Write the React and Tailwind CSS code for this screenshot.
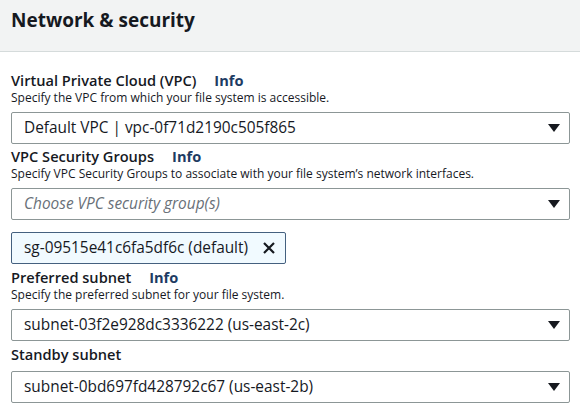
function Caret() {
  return (
    <svg width="12" height="8" viewBox="0 0 12 8" className="shrink-0">
      <path d="M0 0h12L6 8z" fill="#16191f" />
    </svg>
  );
}

function Select({ value, placeholder }) {
  return (
    <div className="flex h-[32px] items-center justify-between rounded-[2px] border border-[#8c9696] bg-white pl-[12px] pr-[9px]">
      {value ? (
        <span className="text-[15.4px] text-[#16191f]">{value}</span>
      ) : (
        <span className="text-[15.4px] italic text-[#687078]">{placeholder}</span>
      )}
      <Caret />
    </div>
  );
}

function Label({ children, info }) {
  return (
    <div className="flex items-baseline text-[14.6px] font-semibold leading-[20px] text-[#16191f]">
      <span>{children}</span>
      {info && <span className="ml-[18px] font-bold text-[#1d3b63]">Info</span>}
    </div>
  );
}

function Desc({ children }) {
  return <p className="text-[12px] leading-[16px] text-[#16191f]">{children}</p>;
}

export default function App() {
  return (
    <div className="h-[413px] w-[580px] overflow-hidden bg-white font-['Open_Sans',sans-serif]">
      <div className="h-[52px] border-b border-[#d5dbdb] bg-[#f2f3f3] px-[11px] pt-[7px]">
        <h2 className="text-[19px] font-bold leading-[26px] text-[#16191f]">Network &amp; security</h2>
      </div>

      <div className="px-[11px] pr-[10px] pt-[18px]">
        <Label info>Virtual Private Cloud (VPC)</Label>
        <Desc>Specify the VPC from which your file system is accessible.</Desc>
        <div className="mt-[6px]">
          <Select value="Default VPC | vpc-0f71d2190c505f865" />
        </div>

        <div className="mt-[2px]">
          <Label info>VPC Security Groups</Label>
          <Desc>Specify VPC Security Groups to associate with your file system’s network interfaces.</Desc>
          <div className="mt-[6px]">
            <Select placeholder="Choose VPC security group(s)" />
          </div>
          <div className="mt-[12px] flex h-[32px] w-[275px] items-center justify-between rounded-[2px] border border-[#44607f] bg-[#f1faff] pl-[12px] pr-[9px]">
            <span className="text-[15.4px] text-[#16191f]">sg-09515e41c6fa5df6c (default)</span>
            <svg width="14" height="14" viewBox="0 0 14 14">
              <path d="M2 2l10 10M12 2L2 12" stroke="#16191f" strokeWidth="2.2" />
            </svg>
          </div>
        </div>

        <div className="mt-[3px]">
          <Label info>Preferred subnet</Label>
          <Desc>Specify the preferred subnet for your file system.</Desc>
          <div className="mt-[6px]">
            <Select value="subnet-03f2e928dc3336222 (us-east-2c)" />
          </div>
        </div>

        <div className="mt-[3px]">
          <Label>Standby subnet</Label>
          <div className="mt-[7px]">
            <Select value="subnet-0bd697fd428792c67 (us-east-2b)" />
          </div>
        </div>
      </div>
    </div>
  );
}
